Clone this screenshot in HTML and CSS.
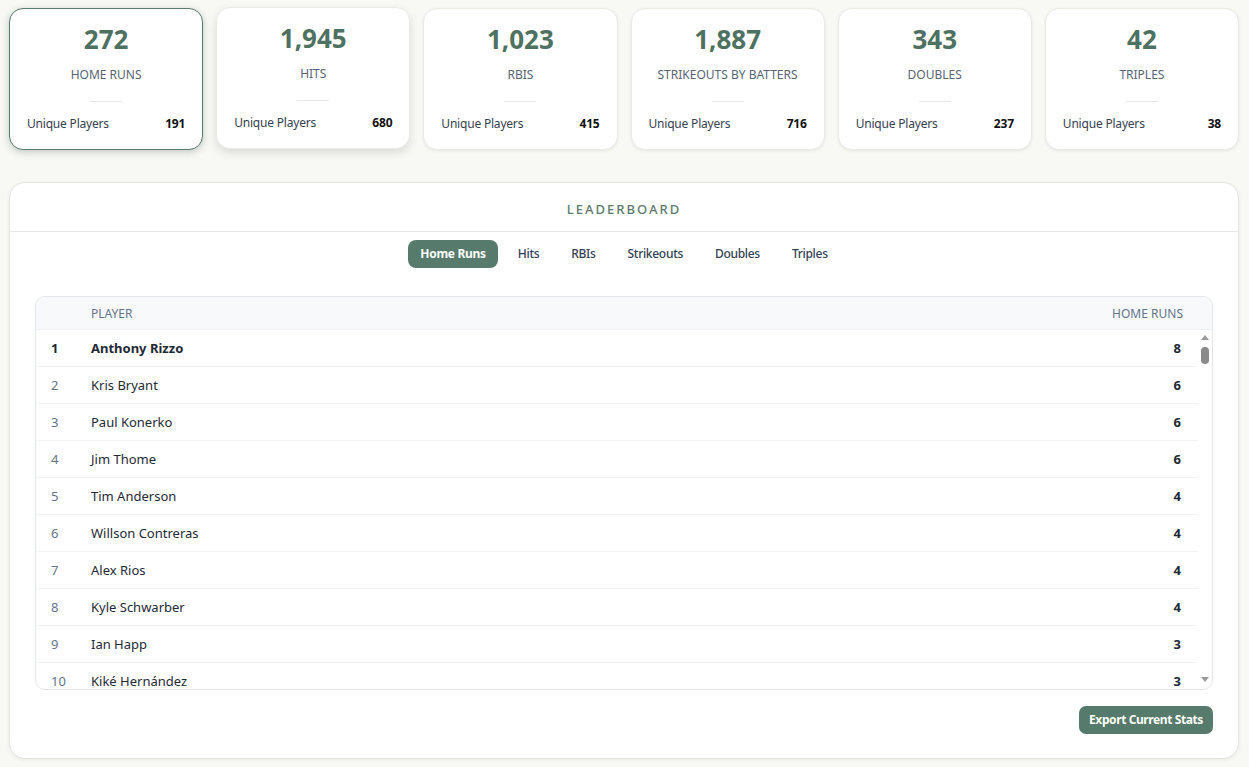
FILE: index.html
```html
<!DOCTYPE html>
<html lang="en">
<head>
	<meta charset="utf-8">
	<title>Game log stats</title>
	<link rel="stylesheet" href="styles.css">
</head>
<body>
<div class="page">
	<section class="stats">
		<div class="card active">
			<div class="value">272</div>
			<div class="label">Home Runs</div>
			<div class="rule"></div>
			<div class="meta"><span>Unique Players</span><b>191</b></div>
		</div>
		<div class="card lift">
			<div class="value">1,945</div>
			<div class="label">Hits</div>
			<div class="rule"></div>
			<div class="meta"><span>Unique Players</span><b>680</b></div>
		</div>
		<div class="card">
			<div class="value">1,023</div>
			<div class="label">RBIs</div>
			<div class="rule"></div>
			<div class="meta"><span>Unique Players</span><b>415</b></div>
		</div>
		<div class="card">
			<div class="value">1,887</div>
			<div class="label">Strikeouts by Batters</div>
			<div class="rule"></div>
			<div class="meta"><span>Unique Players</span><b>716</b></div>
		</div>
		<div class="card">
			<div class="value">343</div>
			<div class="label">Doubles</div>
			<div class="rule"></div>
			<div class="meta"><span>Unique Players</span><b>237</b></div>
		</div>
		<div class="card">
			<div class="value">42</div>
			<div class="label">Triples</div>
			<div class="rule"></div>
			<div class="meta"><span>Unique Players</span><b>38</b></div>
		</div>
	</section>

	<section class="board">
		<h2 class="board-title">Leaderboard</h2>
		<nav class="tabs">
			<button class="tab on" type="button">Home Runs</button>
			<button class="tab" type="button">Hits</button>
			<button class="tab" type="button">RBIs</button>
			<button class="tab" type="button">Strikeouts</button>
			<button class="tab" type="button">Doubles</button>
			<button class="tab" type="button">Triples</button>
		</nav>
		<div class="table">
			<div class="thead">
				<span></span>
				<span>Player</span>
				<span>Home Runs</span>
			</div>
			<div class="tbody">
				<div class="rows">
					<div class="row top"><span class="rank">1</span><span class="name">Anthony Rizzo</span><b>8</b></div>
					<div class="row"><span class="rank">2</span><span class="name">Kris Bryant</span><b>6</b></div>
					<div class="row"><span class="rank">3</span><span class="name">Paul Konerko</span><b>6</b></div>
					<div class="row"><span class="rank">4</span><span class="name">Jim Thome</span><b>6</b></div>
					<div class="row"><span class="rank">5</span><span class="name">Tim Anderson</span><b>4</b></div>
					<div class="row"><span class="rank">6</span><span class="name">Willson Contreras</span><b>4</b></div>
					<div class="row"><span class="rank">7</span><span class="name">Alex Rios</span><b>4</b></div>
					<div class="row"><span class="rank">8</span><span class="name">Kyle Schwarber</span><b>4</b></div>
					<div class="row"><span class="rank">9</span><span class="name">Ian Happ</span><b>3</b></div>
					<div class="row"><span class="rank">10</span><span class="name">Kiké Hernández</span><b>3</b></div>
				</div>
				<div class="scrollbar">
					<span class="arrow up"></span>
					<span class="thumb"></span>
					<span class="arrow down"></span>
				</div>
			</div>
		</div>
		<div class="actions">
			<button class="export" type="button">Export Current Stats</button>
		</div>
	</section>
</div>
</body>
</html>
```

FILE: styles.css
```css
body{
	margin: 0;
	background: #f8f8f4;
	font-family: "Noto Sans", "Open Sans", sans-serif;
	color: #1f2937;
}
.page{
	padding: 8px 10px 8px 9px;
}
.stats{
	display: grid;
	grid-template-columns: repeat(6, 1fr);
	gap: 13px;
}
.card{
	background: #fff;
	border: 1px solid #ebebe6;
	border-radius: 14px;
	padding: 13px 17px 16px;
	text-align: center;
	box-shadow: 0 1px 3px rgba(0, 0, 0, .08);
}
.card.active{
	border-color: #5a7b6b;
	box-shadow: 0 2px 7px rgba(60, 90, 75, .3);
}
.card.lift{
	transform: translateY(-1px);
	box-shadow: 0 4px 10px rgba(0, 0, 0, .12);
}
.value{
	font-size: 26px;
	line-height: 34px;
	font-weight: 700;
	color: #4e7161;
}
.label{
	margin-top: 10px;
	font-size: 12px;
	line-height: 18px;
	color: #5a6477;
	text-transform: uppercase;
}
.rule{
	width: 32px;
	height: 1px;
	margin: 17px auto 0;
	background: #e6e6e6;
}
.meta{
	display: flex;
	justify-content: space-between;
	margin-top: 13px;
	font-size: 12px;
	line-height: 18px;
	color: #374151;
	letter-spacing: -.2px;
}
.meta b{
	color: #111;
}

.board{
	margin-top: 32px;
	padding-bottom: 24px;
	background: #fff;
	border: 1px solid #e5e5df;
	border-radius: 16px;
	box-shadow: 0 1px 4px rgba(0, 0, 0, .06);
}
.board-title{
	margin: 0;
	padding: 17px 0 13px;
	text-align: center;
	font-size: 13px;
	line-height: 18px;
	font-weight: 500;
	letter-spacing: 2px;
	text-transform: uppercase;
	color: #5d7b6d;
	border-bottom: 1px solid #e8e8e8;
}
.tabs{
	display: flex;
	justify-content: center;
	gap: 8px;
	margin-top: 8px;
}
.tab{
	height: 28px;
	padding: 0 12px;
	border: 0;
	border-radius: 8px;
	background: none;
	font: 500 12px/28px "Noto Sans", "Open Sans", sans-serif;
	letter-spacing: -.3px;
	color: #334155;
}
.tab.on{
	background: #567a6b;
	color: #fff;
	font-weight: 700;
}
.table{
	margin: 28px 25px 0;
	border: 1px solid #e3e6ea;
	border-radius: 10px;
	overflow: hidden;
}
.thead, .row{
	display: grid;
	grid-template-columns: 55px 1fr auto;
	align-items: center;
}
.thead{
	height: 32px;
	padding-right: 29px;
	background: #f8f9fb;
	border-bottom: 1px solid #eef0f2;
	font-size: 12px;
	color: #64748b;
	text-transform: uppercase;
}
.tbody{
	display: flex;
	height: 359px;
}
.rows{
	flex: 1;
	overflow: hidden;
}
.row{
	height: 36px;
	padding-right: 17px;
	border-bottom: 1px solid #f1f2f4;
	font-size: 13px;
}
.rank{
	padding-left: 15px;
	color: #64748b;
}
.row b{
	color: #1f2937;
}
.row.top .rank, .row.top .name{
	font-weight: 700;
	color: #1f2937;
}
.scrollbar{
	width: 14px;
	display: flex;
	flex-direction: column;
	align-items: center;
}
.arrow{
	width: 0;
	height: 0;
	border-left: 4px solid transparent;
	border-right: 4px solid transparent;
}
.arrow.up{
	margin-top: 5px;
	border-bottom: 5px solid #9a9a9a;
}
.arrow.down{
	margin: auto 0 7px;
	border-top: 5px solid #9a9a9a;
}
.thumb{
	width: 8px;
	height: 17px;
	margin-top: 7px;
	border-radius: 4px;
	background: #8a8a8a;
}
.actions{
	display: flex;
	justify-content: flex-end;
	margin: 16px 25px 0;
}
.export{
	height: 28px;
	padding: 0 10px;
	border: 0;
	border-radius: 7px;
	background: #567a6b;
	color: #fff;
	font: 700 12px/28px "Noto Sans", "Open Sans", sans-serif;
	letter-spacing: -.4px;
}
```
